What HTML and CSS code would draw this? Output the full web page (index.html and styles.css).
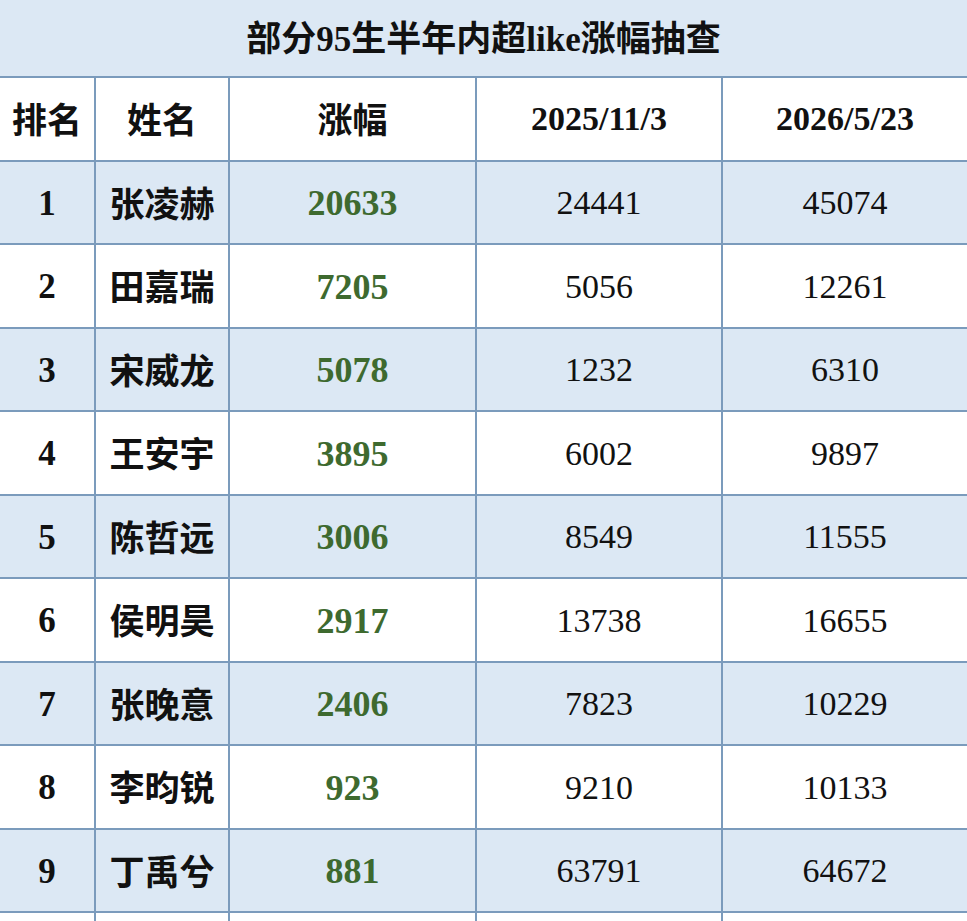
FILE: index.html
```html
<!DOCTYPE html>
<html lang="zh">
<head>
<meta charset="utf-8">
<link rel="stylesheet" href="styles.css">
</head>
<body>
<div class="sheet">
  <div class="title">部分95生半年内超like涨幅抽查</div>
  <div class="cell head">排名</div>
  <div class="cell head">姓名</div>
  <div class="cell head">涨幅</div>
  <div class="cell head date">2025/11/3</div>
  <div class="cell head date">2026/5/23</div>

  <div class="cell rank alt">1</div><div class="cell name alt">张凌赫</div><div class="cell gain alt">20633</div><div class="cell num alt">24441</div><div class="cell num alt">45074</div>
  <div class="cell rank">2</div><div class="cell name">田嘉瑞</div><div class="cell gain">7205</div><div class="cell num">5056</div><div class="cell num">12261</div>
  <div class="cell rank alt">3</div><div class="cell name alt">宋威龙</div><div class="cell gain alt">5078</div><div class="cell num alt">1232</div><div class="cell num alt">6310</div>
  <div class="cell rank">4</div><div class="cell name">王安宇</div><div class="cell gain">3895</div><div class="cell num">6002</div><div class="cell num">9897</div>
  <div class="cell rank alt">5</div><div class="cell name alt">陈哲远</div><div class="cell gain alt">3006</div><div class="cell num alt">8549</div><div class="cell num alt">11555</div>
  <div class="cell rank">6</div><div class="cell name">侯明昊</div><div class="cell gain">2917</div><div class="cell num">13738</div><div class="cell num">16655</div>
  <div class="cell rank alt">7</div><div class="cell name alt">张晚意</div><div class="cell gain alt">2406</div><div class="cell num alt">7823</div><div class="cell num alt">10229</div>
  <div class="cell rank">8</div><div class="cell name">李昀锐</div><div class="cell gain">923</div><div class="cell num">9210</div><div class="cell num">10133</div>
  <div class="cell rank alt">9</div><div class="cell name alt">丁禹兮</div><div class="cell gain alt">881</div><div class="cell num alt">63791</div><div class="cell num alt">64672</div>
  <div class="cell"></div><div class="cell"></div><div class="cell"></div><div class="cell"></div><div class="cell"></div>
</div>
</body>
</html>
```
FILE: styles.css
```css
html, body {
  margin: 0;
  padding: 0;
  background: #ffffff;
  overflow: hidden;
}
.sheet {
  width: 967px;
  display: grid;
  grid-template-columns: 94px 132px 245px 244px 244px;
  grid-auto-rows: 81.5px;
  grid-template-rows: 76px;
  gap: 2px;
  background: #7b9bbc;
  font-family: "Liberation Serif", "Noto Sans CJK SC", serif;
  color: #111111;
}
.title {
  grid-column: 1 / -1;
  background: #dce8f4;
  display: flex;
  align-items: center;
  justify-content: center;
  font-weight: 700;
  font-size: 35px;
  padding-bottom: 5px;
  box-sizing: border-box;
}
.cell {
  background: #ffffff;
  display: flex;
  align-items: center;
  justify-content: center;
  font-size: 34px;
}
.cell.alt {
  background: #dce8f4;
}
.head {
  font-weight: 700;
  font-size: 35px;
  padding-bottom: 2px;
}
.head.date {
  font-size: 34px;
  padding-bottom: 0;
}
.rank {
  font-weight: 700;
  font-size: 35px;
  padding-top: 3px;
}
.name {
  font-weight: 700;
  font-size: 35px;
  padding-bottom: 2px;
}
.gain {
  font-weight: 700;
  font-size: 36px;
  color: #3e6a2f;
  padding-top: 2px;
}
.num {
  font-weight: 400;
  font-size: 34px;
  padding-top: 2px;
}
```
